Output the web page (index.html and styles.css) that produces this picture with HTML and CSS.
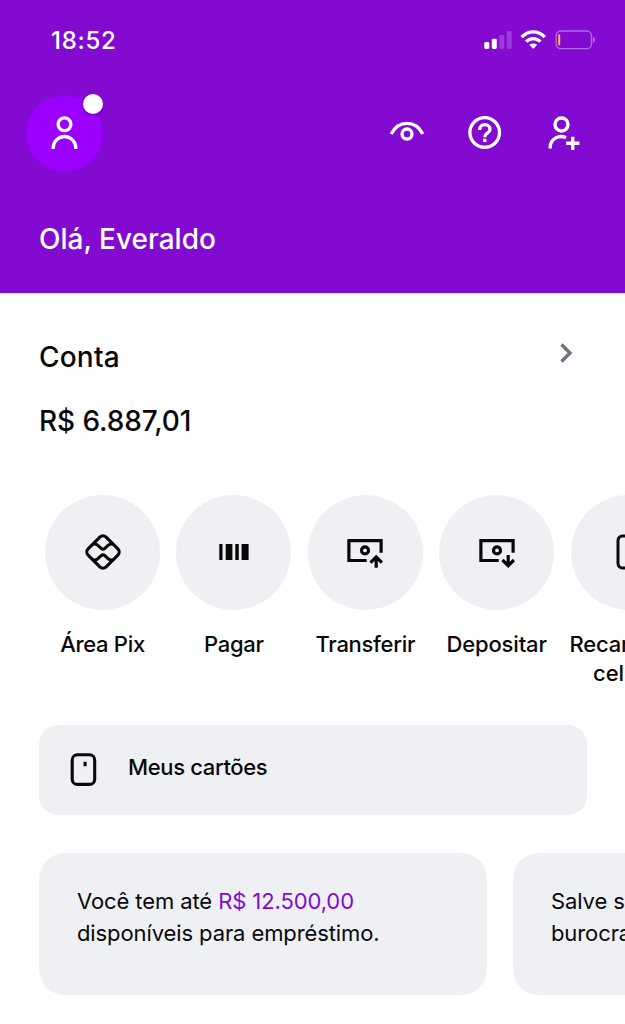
FILE: index.html
```html
<!DOCTYPE html>
<html lang="pt-BR">
<head>
<meta charset="utf-8">
<meta name="viewport" content="width=device-width">
<title>Conta</title>
<link rel="stylesheet" href="styles.css">
</head>
<body>
<header class="header">
  <div class="status">
    <span class="time">18:52</span>
    <svg class="status-icons" width="112" height="20" viewBox="0 0 112 20">
      <g fill="#fff">
        <rect x="0.3" y="12" width="5" height="7" rx="1.4"/>
        <rect x="7.8" y="8.7" width="5" height="10.3" rx="1.4"/>
        <rect x="15.3" y="5" width="5" height="14" rx="1.4" opacity=".2"/>
        <rect x="22.8" y="1" width="5" height="18" rx="1.4" opacity=".2"/>
        <path d="M45.4 14.7c2.3-1.7 5.4-1.7 7.700 0l-3.100 3.500a1 1 0 0 1-1.500 0z"/>
      </g>
      <g fill="none" stroke="#fff" stroke-width="3.3">
        <path d="M37.700 7.200c6.400-7.200 16.700-7.200 23.100 0"/>
        <path d="M42.100 11.700c4.100-4.100 10.200-4.100 14.300 0"/>
      </g>
      <rect x="72.2" y="1" width="35.3" height="17.6" rx="4.7" fill="none" stroke="#b56be3" stroke-width="1.4"/>
      <path d="M109 7c2.800.8 2.800 4.900 0 5.700z" fill="#b56be3"/>
      <rect x="74.2" y="4.2" width="2" height="11.2" rx=".8" fill="#ffb43e"/>
    </svg>
  </div>
  <div class="toolbar">
    <div class="avatar">
      <svg width="30" height="34" viewBox="0 0 30 34" fill="none" stroke="#fff" stroke-width="3.3">
        <circle cx="14.500" cy="8.3" r="6.4"/><path d="M3.2 33v-1.2a11.3 11.3 0 0 1 22.6 0V33"/>
      </svg>
      <span class="badge"></span>
    </div>
    <nav class="actions">
      <svg width="36" height="36" viewBox="0 0 36 36" fill="none" stroke="#fff" stroke-width="3.3">
        <path d="M2.2 19c7.2-14.2 24.4-14.2 31.6 0"/><circle cx="18" cy="19" r="5"/>
      </svg>
      <svg width="36" height="36" viewBox="0 0 36 36" fill="none" stroke="#fff" stroke-width="3.3">
        <circle cx="17.700" cy="17.5" r="14.8"/>
        <path d="M12.700 15.1v-.6c0-3 2.2-4.800 5.100-4.800 3 0 5.200 1.800 5.200 4.600 0 4.200-5.300 3.600-5.300 7.900"/>
        <path d="M17.800 23.700v3.400"/>
      </svg>
      <svg width="36" height="36" viewBox="0 0 36 36" fill="none" stroke="#fff" stroke-width="3.4">
        <circle cx="16.500" cy="9.5" r="6.5"/><path d="M5.2 33.4v-1c0-8.500 8.600-13 15.800-9.600M27.700 21.800v13.200M21.200 28.3h13.200"/>
      </svg>
    </nav>
  </div>
  <h1 class="greeting">Olá, Everaldo</h1>
</header>
<main>
  <section class="account">
    <div class="account-head">
      <h2 class="title">Conta</h2>
      <svg width="14" height="20" viewBox="0 0 14 20" fill="none" stroke="#716e81" stroke-width="3.3"><path d="M1.5 1.5 10 10 1.500 18.500"/></svg>
    </div>
    <p class="balance">R$ 6.887,01</p>
  </section>
  <section class="shortcuts">
    <div class="shortcut">
      <span class="disc"><svg width="38" height="38" viewBox="0 0 38 38" fill="none" stroke="#08080a" stroke-width="3.1" stroke-linejoin="round">
        <path d="M15.900 4.100a4.400 4.400 0 0 1 6.200 0l11.800 11.800a4.400 4.400 0 0 1 0 6.200L22.100 33.900a4.400 4.400 0 0 1-6.200 0L4.100 22.100a4.400 4.400 0 0 1 0-6.200z"/>
        <path d="M9.200 11h1.600c1.200 0 2 .400 2.800 1.200l3.600 3.200c1.100 1 2.500 1 3.600 0l3.600-3.200c.800-.800 1.600-1.200 2.800-1.200h1.600M9.200 27h1.600c1.200 0 2-.400 2.800-1.200l3.600-3.200c1.100-1 2.500-1 3.600 0l3.600 3.200c.800.800 1.600 1.200 2.800 1.200h1.600"/>
      </svg></span>
      <span class="label l-pix">Área Pix</span>
    </div>
    <div class="shortcut">
      <span class="disc"><svg width="38" height="38" viewBox="0 0 38 38" fill="#08080a">
        <path d="M4.300 11h3.200v16H4.300zM10.700 11h6.700v16h-6.700zM20.300 11h3.500v16h-3.500zM26.600 11h7v16h-7z"/>
      </svg></span>
      <span class="label l-pay">Pagar</span>
    </div>
    <div class="shortcut">
      <span class="disc"><svg width="38" height="38" viewBox="0 0 38 38" fill="none" stroke="#08080a" stroke-width="3.200">
        <path d="M20.700 27.500H2.900V7.700h32.200V19.700"/><circle cx="19" cy="17.400" r="3.500"/><path d="M30.200 34.700V24.300M24.500 29.700l5.700-5.700 5.700 5.700"/>
      </svg></span>
      <span class="label l-transfer">Transferir</span>
    </div>
    <div class="shortcut">
      <span class="disc"><svg width="38" height="38" viewBox="0 0 38 38" fill="none" stroke="#08080a" stroke-width="3.200">
        <path d="M20.700 27.500H2.900V7.700h32.200V19.700"/><circle cx="19" cy="17.400" r="3.500"/><path d="M30.200 22V32.500M24.500 27l5.700 5.700 5.700-5.700"/>
      </svg></span>
      <span class="label l-deposit">Depositar</span>
    </div>
    <div class="shortcut">
      <span class="disc"><svg width="38" height="38" viewBox="0 0 38 38" fill="none" stroke="#08080a" stroke-width="3">
        <rect x="9" y="3" width="20" height="32" rx="4.500"/>
      </svg></span>
      <span class="label l-recharge">Recarga de<br>celular</span>
    </div>
  </section>
  <section class="cards">
    <svg width="28" height="34" viewBox="0 0 28 34" fill="none" stroke="#08080a" stroke-width="3.100">
      <rect x="3.200" y="1.700" width="22.500" height="29.700" rx="5.200"/><path d="M16.100 8.800v4.400"/>
    </svg>
    <span class="cards-label">Meus cartões</span>
  </section>
  <section class="offers">
    <p class="offer">Você tem até <span class="amount">R$ 12.500,00</span><br>disponíveis para empréstimo.</p>
    <p class="offer">Salve seus amigos da<br>burocracia.</p>
  </section>
</main>
</body>
</html>
```
FILE: styles.css
```css
* { box-sizing: border-box; margin: 0; padding: 0; }
svg { display: block; flex: none; }
body {
  width: 625px;
  height: 1024px;
  overflow: hidden;
  background: #fff;
  color: #08080a;
  font-family: Inter, "Liberation Sans", sans-serif;
}
.header {
  height: 294px;
  background: #820ad1;
  border-bottom: 1px solid #f3dcfb;
  color: #fff;
}
.status {
  height: 95px;
  padding: 26px 29px 0 51px;
  display: flex;
  justify-content: space-between;
}
.time { font-size: 24px; line-height: 30px; font-weight: 500; letter-spacing: 0.7px; }
.status-icons { margin-top: 4px; }
.toolbar {
  height: 76px;
  padding: 0 44px 0 26px;
  display: flex;
  justify-content: space-between;
  align-items: center;
}
.avatar {
  position: relative;
  width: 77px;
  height: 77px;
  border-radius: 50%;
  background: #9b00ff;
  display: flex;
  align-items: center;
  justify-content: center;
}
.badge {
  position: absolute;
  top: -1px;
  right: 0;
  width: 20px;
  height: 20px;
  border-radius: 50%;
  background: #fff;
  box-shadow: 0 2px 3px rgba(60, 0, 100, .35);
}
.actions { display: flex; gap: 42px; }
.greeting {
  padding: 50px 39px 0;
  font-size: 28px;
  line-height: 36px;
  font-weight: 550;
}
.account { padding: 45px 51px 0 39px; height: 201px; }
.account-head { display: flex; justify-content: space-between; }
.account-head svg { margin-top: 4px; }
.title, .balance { font-size: 28px; line-height: 36px; font-weight: 550; }
.title { letter-spacing: 0.2px; }
.balance { margin-top: 28px; letter-spacing: -0.1px; }
.shortcuts {
  height: 230px;
  padding-left: 45px;
  display: flex;
  gap: 16.4px;
  overflow: hidden;
}
.shortcut { flex: none; width: 115px; display: flex; flex-direction: column; align-items: center; }
.disc {
  width: 115px;
  height: 115px;
  padding-bottom: 2px;
  border-radius: 50%;
  background: #eff0f4;
  display: flex;
  align-items: center;
  justify-content: center;
}
.label {
  margin-top: 20px;
  font-size: 22px;
  line-height: 29px;
  font-weight: 550;
  letter-spacing: -0.3px;
  text-align: center;
  white-space: nowrap;
}
.l-deposit, .l-recharge { letter-spacing: -0.15px; }
.cards {
  width: 548px;
  height: 90px;
  margin-left: 39px;
  padding-left: 30px;
  border-radius: 19px;
  background: #eff0f4;
  display: flex;
  align-items: center;
  gap: 31px;
}
.cards-label {
  margin-top: -6px;
  font-size: 22px;
  line-height: 30px;
  font-weight: 550;
  letter-spacing: -0.35px;
}
.offers { display: flex; gap: 26px; padding: 38px 0 0 39px; overflow: hidden; }
.offer {
  flex: none;
  width: 448px;
  height: 142px;
  padding: 32px 38px;
  border-radius: 26px;
  background: #eff0f4;
  font-size: 22px;
  line-height: 32px;
  letter-spacing: -0.1px;
  white-space: nowrap;
}
.amount { color: #820ad1; }
```
